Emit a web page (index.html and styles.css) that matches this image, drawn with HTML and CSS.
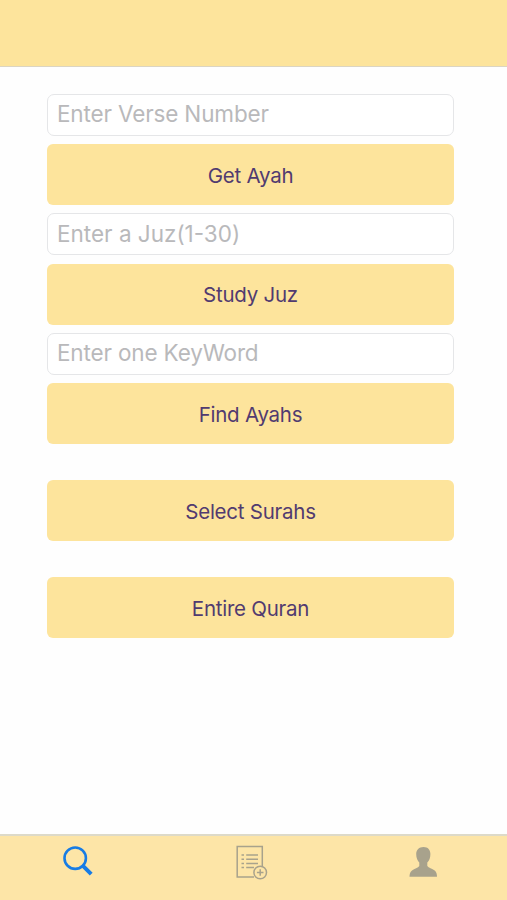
FILE: index.html
```html
<!DOCTYPE html>
<html lang="en">
<head>
    <meta charset="UTF-8">
    <meta name="viewport" content="width=device-width, initial-scale=1.0">
    <title>Quran Search</title>
    <link rel="stylesheet" href="styles.css">
</head>
<body>
    <header class="nav-bar"></header>
    <main>
        <form class="search-form">
            <input type="text" class="verse" placeholder="Enter Verse Number" aria-label="Verse number">
            <button type="button" class="get">Get Ayah</button>
            <input type="text" class="juz" placeholder="Enter a Juz(1-30)" aria-label="Juz">
            <button type="button" class="study">Study Juz</button>
            <input type="text" class="keyword" placeholder="Enter one KeyWord" aria-label="Keyword">
            <button type="button" class="find">Find Ayahs</button>
        </form>
        <div class="browse">
            <button type="button" class="surahs">Select Surahs</button>
            <button type="button" class="entire">Entire Quran</button>
        </div>
    </main>
    <nav class="tab-bar">
        <a class="tab active" aria-label="Search">
            <svg width="36" height="36" viewBox="0 0 36 36" fill="none" stroke="currentColor">
                <circle cx="15.2" cy="14.2" r="10.7" stroke-width="2.6"/>
                <path d="M22.7 21.7L31.2 30.2" stroke-width="4"/>
            </svg>
        </a>
        <a class="tab" aria-label="Add to list">
            <svg width="36" height="36" viewBox="0 0 36 36" fill="none" stroke="currentColor" stroke-width="1.5">
                <path d="M21 33H4.2V2.4H29.3V22.5"/>
                <path d="M13.2 11H25M13.2 15.2H25M13.2 19.5H25M13.2 23.5H21M8.5 11H11M8.5 15.2H11M8.5 19.5H11M8.5 23.5H11"/>
                <circle cx="27.2" cy="28.5" r="6.3"/>
                <path d="M27.2 25.2V31.8M23.9 28.5H30.5"/>
            </svg>
        </a>
        <a class="tab" aria-label="Profile">
            <svg width="36" height="36" viewBox="0 0 36 36" fill="currentColor">
                <path d="M18.5 3C14 3 11.2 5.8 11.2 10C11.2 14 12.5 16.8 14.3 18.6V22C13.1 23.8 9.5 24.8 7 26.4C5 27.8 4.5 30 4.5 32.8H32C32 30 31.5 27.8 29.7 26.4C27.2 24.8 23.5 23.8 22.3 22V18.6C24.3 16.8 25.4 14 25.4 10C25.4 5.8 23 3 18.5 3Z"/>
            </svg>
        </a>
    </nav>
</body>
</html>
```
FILE: styles.css
```css
* {
    box-sizing: border-box;
}
body {
    margin: 0;
    height: 100vh;
    display: flex;
    flex-direction: column;
    background-color: #fefefe;
    font-family: Inter, sans-serif;
}
.nav-bar {
    height: 67px;
    flex-shrink: 0;
    background-color: #fde49c;
    border-bottom: 1px solid #dbd5c3;
}
main {
    flex: 1;
    padding: 26.8px 53px 0 47px;
}
.search-form {
    display: flex;
    flex-direction: column;
    gap: 8.25px;
}
input {
    width: 100%;
    height: 42px;
    padding: 0 9px 2px;
    border: 1.5px solid #e5e6e8;
    border-radius: 7px;
    background-color: #fff;
    font-family: inherit;
    font-size: 22.5px;
    letter-spacing: -0.15px;
}
input.juz {
    letter-spacing: 0;
}
input::placeholder {
    color: #b9b9bb;
    opacity: 1;
}
button {
    width: 100%;
    height: 61px;
    padding: 1px 0 0;
    border: none;
    border-radius: 6px;
    background-color: #fde49c;
    color: #513b70;
    font-family: inherit;
    font-size: 20.5px;
    letter-spacing: -0.25px;
}
.browse {
    display: flex;
    flex-direction: column;
    gap: 36px;
    margin-top: 36.3px;
}
.tab-bar {
    display: flex;
    justify-content: space-between;
    height: 66px;
    flex-shrink: 0;
    padding: 8px 66px 0 60px;
    border-top: 2px solid #dddac9;
    background-color: #fde5a7;
}
.tab {
    color: #a8a28c;
}
.tab.active {
    color: #177ce5;
}
.tab svg {
    display: block;
}
```
